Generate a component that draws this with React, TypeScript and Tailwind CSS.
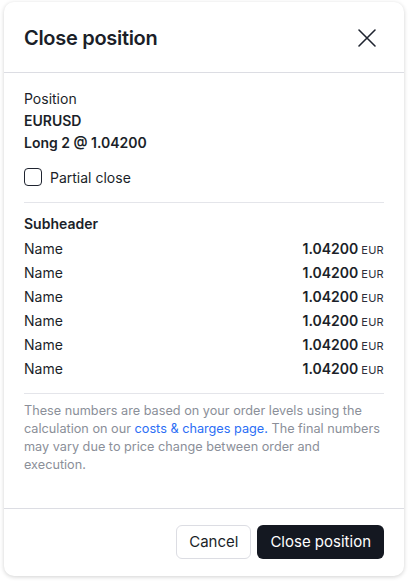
import React, { FC } from "react";

const rows = Array.from({ length: 6 }, () => ({ name: "Name", value: "1.04200", ccy: "EUR" }));

const CloseIcon: FC = () => (
  <svg width="20" height="20" viewBox="0 0 20 20" fill="none" stroke="#1f2430" strokeWidth="1.6" strokeLinecap="round">
    <path d="M2 2L18 18M18 2L2 18" />
  </svg>
);

const App: FC = () => {
  return (
    <div className="min-h-[581px] bg-white pt-[2px] px-[4px] font-['Inter',sans-serif] text-[#1b1f29]">
      <div className="w-[400px] rounded-[10px] bg-white shadow-[0_1px_4px_rgba(0,0,0,0.18)]">
        <div className="flex h-[71px] items-center justify-between border-b border-[#dcdde3] pl-5 pr-[27px] pt-[2px]">
          <h2 className="text-[20px] font-semibold tracking-[-0.3px]">Close position</h2>
          <button className="flex items-center justify-center">
            <CloseIcon />
          </button>
        </div>

        <div className="px-5 pt-[15px] pb-[34px] text-[14px]">
          <div className="leading-[22px]">Position</div>
          <div className="font-semibold leading-[22px]">EURUSD</div>
          <div className="font-semibold leading-[22px]">Long 2 @ 1.04200</div>

          <label className="mt-[12px] flex h-[22px] items-center gap-2">
            <span className="size-[18px] rounded-[4px] border-[1.5px] border-[#1f2430]" />
            <span>Partial close</span>
          </label>

          <div className="mt-[14px] border-t border-[#e4e5ea]" />

          <div className="mt-[9px] h-6 font-semibold leading-[24px]">Subheader</div>
          {rows.map((r, i) => (
            <div key={i} className="flex h-6 items-center justify-between">
              <span>{r.name}</span>
              <span className="flex items-baseline gap-[3px]">
                <span className="font-semibold">{r.value}</span>
                <span className="text-[11px] tracking-[0.3px] text-[#2b2f3a]">{r.ccy}</span>
              </span>
            </div>
          ))}

          <div className="mt-[13px] border-t border-[#e4e5ea]" />

          <p className="mt-[8px] text-[12.7px] leading-[18px] text-[#8b8f99]">
            These numbers are based on your order levels using the calculation on our{" "}
            <a className="text-[#2b6ef5]">costs &amp; charges page.</a> The final numbers may vary due to price change
            between order and execution.
          </p>
        </div>

        <div className="flex justify-end gap-[6px] border-t border-[#dcdde3] px-5 pt-4 pb-[17px]">
          <button className="h-[34px] rounded-[6px] border border-[#dcdde3] px-3 text-[15px]">Cancel</button>
          <button className="h-[34px] rounded-[6px] bg-[#141821] px-[13px] text-[15px] text-white">Close position</button>
        </div>
      </div>
    </div>
  );
};

export default App;
